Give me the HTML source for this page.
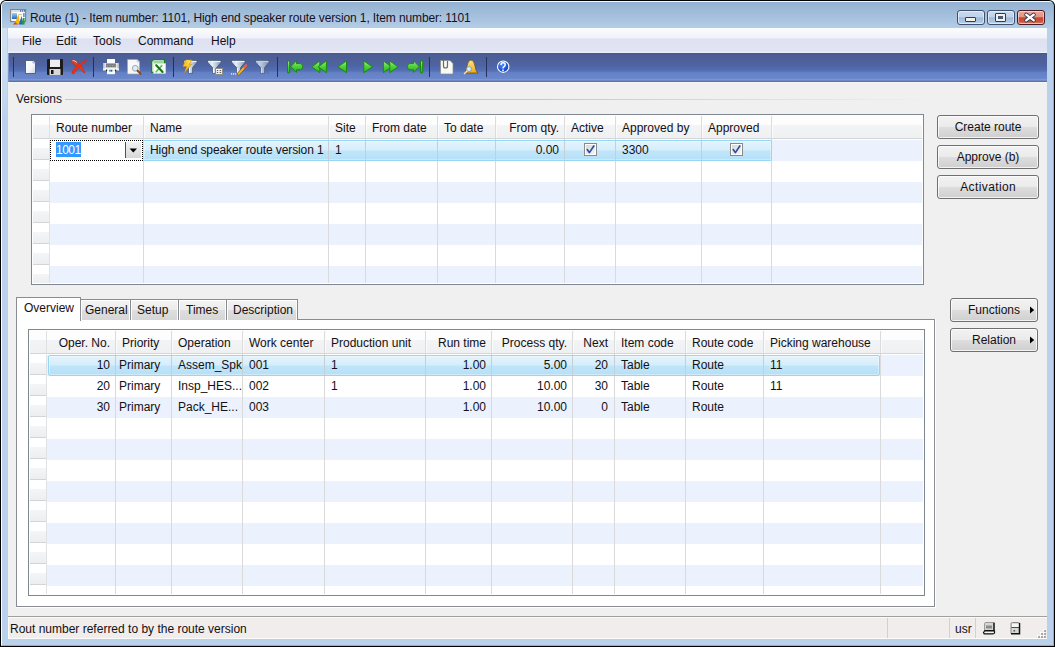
<!DOCTYPE html><html><head><meta charset="utf-8"><style>
html,body{margin:0;padding:0;}
body{width:1055px;height:647px;position:relative;overflow:hidden;background:#fff;font-family:"Liberation Sans",sans-serif;font-size:12px;color:#141014;}
.t{position:absolute;white-space:nowrap;line-height:14px;height:14px;font-size:12px;}
div{box-sizing:border-box;}
svg{position:absolute;overflow:visible;}

</style></head><body>
<div style="position:absolute;left:0px;top:0px;width:1055px;height:647px;background:#000;border-radius:6px 6px 0 0;"></div>
<div style="position:absolute;left:1px;top:1px;width:1053px;height:645px;background:linear-gradient(#93b1d1 0px,#b4cde7 26px,#b9d1ea 27px);border-top:1px solid #f4f8fc;border-left:1px solid #fafcff;border-right:1px solid #3ccff2;border-bottom:1px solid #3ccff2;border-radius:5px 5px 0 0;"></div>
<div style="position:absolute;left:2px;top:28px;width:5px;height:92px;background:linear-gradient(#d2e2f3,#c2d7ee 80%,#b9d1ea);"></div>
<svg style="left:8px;top:7px" width="20" height="20" viewBox="0 0 20 20">
<defs><linearGradient id="ib" x1="0" y1="0" x2="0" y2="1"><stop offset="0" stop-color="#9fd0f4"/><stop offset="1" stop-color="#2a64c4"/></linearGradient></defs>
<rect x="2.6" y="2.6" width="15" height="12" fill="#fbfbfb" stroke="#858585" stroke-width="1.2"/>
<rect x="3.2" y="3.2" width="13.8" height="1.6" fill="#d6d8dc"/>
<rect x="12" y="3.2" width="1.2" height="1.4" fill="#3a5a8a"/><rect x="14" y="3.2" width="1.2" height="1.4" fill="#3a5a8a"/><rect x="16" y="3.2" width="1" height="1.4" fill="#3a5a8a"/>
<rect x="4" y="6" width="5" height="6" fill="url(#ib)"/>
<rect x="15.3" y="6" width="1.2" height="4" fill="#3a6ac8"/>
<path d="M11 7.6 H14" stroke="#b0b0b0" stroke-width="0.8"/>
<path d="M6.5 17 L10.5 6.8 L12 17 Z" fill="#f6b800"/>
<path d="M10.8 17.6 L13.6 9 L15.2 17.6 Z" fill="#2a62c0"/>
<path d="M14.2 17.6 L14.8 11 L16.6 11 L16.6 17.6 Z" fill="#20a030"/>
<path d="M4.8 17.4 L7.2 15.2 L10 17.6 Z" fill="#e63818"/>
</svg>
<div class="t" style="left:30px;top:11px;color:#161020;letter-spacing:-0.12px;">Route (1) - Item number: 1101, High end speaker route version 1, Item number: 1101</div>
<div style="position:absolute;left:957px;top:10px;width:28px;height:15px;background:linear-gradient(#c7d9ee 0%,#c0d3ea 45%,#9fbad9 52%,#abc4e1 80%,#bfd4eb 100%);border:1px solid #3f4f6c;border-radius:3px;box-shadow:inset 0 0 0 1px rgba(255,255,255,0.5);"></div>
<div style="position:absolute;left:987px;top:10px;width:28px;height:15px;background:linear-gradient(#c7d9ee 0%,#c0d3ea 45%,#9fbad9 52%,#abc4e1 80%,#bfd4eb 100%);border:1px solid #3f4f6c;border-radius:3px;box-shadow:inset 0 0 0 1px rgba(255,255,255,0.5);"></div>
<div style="position:absolute;left:1017px;top:10px;width:28px;height:15px;background:linear-gradient(#e9a496 0%,#e39684 45%,#c9462c 52%,#cc5238 80%,#e08a76 100%);border:1px solid #4a1a24;border-radius:3px;box-shadow:inset 0 0 0 1px rgba(255,255,255,0.5);"></div>
<div style="position:absolute;left:965px;top:17px;width:11px;height:5px;background:#f2f0ec;border:1px solid #2f3b55;border-radius:1px;"></div>
<div style="position:absolute;left:995px;top:13px;width:11px;height:9px;background:#f2f0ec;border:1px solid #2f3b55;border-radius:1px;"></div>
<div style="position:absolute;left:998px;top:16px;width:5px;height:3px;background:#4b5a78;"></div>
<svg style="left:1024px;top:13px" width="12" height="9" viewBox="0 0 12 9">
<path d="M2.2 1.6 L9.8 7.4 M9.8 1.6 L2.2 7.4" stroke="#2d3a52" stroke-width="3.9" stroke-linecap="round"/>
<path d="M2.2 1.6 L9.8 7.4 M9.8 1.6 L2.2 7.4" stroke="#ffffff" stroke-width="2.3" stroke-linecap="round"/>
</svg>
<div style="position:absolute;left:8px;top:28px;width:1039px;height:611px;background:#f0f0f0;"></div>
<div style="position:absolute;left:8px;top:28px;width:1039px;height:25px;background:linear-gradient(#fbfcfe 0px,#f0f2f9 10px,#dde1f1 11px,#e1e4f3 23px,#eceefa 24px);"></div>
<div class="t" style="left:22px;top:34px;color:#141014;">File</div>
<div class="t" style="left:56px;top:34px;color:#141014;">Edit</div>
<div class="t" style="left:93px;top:34px;color:#141014;">Tools</div>
<div class="t" style="left:138px;top:34px;color:#141014;">Command</div>
<div class="t" style="left:211px;top:34px;color:#141014;">Help</div>
<div style="position:absolute;left:8px;top:53px;width:1039px;height:29px;background:linear-gradient(#475889 0px,#4d5e96 2px,#4f629d 11px,#4c64a8 12.5px,#5670b4 18px,#6480c4 19.5px,#6b88cc 26px,#8ca4dc 27px,#5670b0 28px);"></div>
<div style="position:absolute;left:8px;top:53px;width:1px;height:29px;background:#7d93c8;"></div>
<div style="position:absolute;left:8px;top:82px;width:1039px;height:1px;background:#f6f6f4;"></div>
<div style="position:absolute;left:13px;top:57px;width:1px;height:20px;background:#26305a;"></div>
<div style="position:absolute;left:93px;top:57px;width:1px;height:20px;background:#26305a;"></div>
<div style="position:absolute;left:173px;top:57px;width:1px;height:20px;background:#26305a;"></div>
<div style="position:absolute;left:277px;top:57px;width:1px;height:20px;background:#26305a;"></div>
<div style="position:absolute;left:429px;top:57px;width:1px;height:20px;background:#26305a;"></div>
<div style="position:absolute;left:486px;top:57px;width:1px;height:20px;background:#26305a;"></div>
<svg style="left:0;top:0" width="1055" height="90" viewBox="0 0 1055 90">
<defs>
<linearGradient id="pg" x1="0" y1="0" x2="1" y2="1"><stop offset="0" stop-color="#ffffff"/><stop offset="0.6" stop-color="#f2f4f8"/><stop offset="1" stop-color="#c9ced8"/></linearGradient>
<linearGradient id="fun" x1="0" y1="0" x2="1" y2="0"><stop offset="0" stop-color="#6f8aa8"/><stop offset="0.35" stop-color="#e9f2f8"/><stop offset="0.7" stop-color="#9fb6c8"/><stop offset="1" stop-color="#5e7690"/></linearGradient>
<linearGradient id="grn" x1="0" y1="0" x2="0" y2="1"><stop offset="0" stop-color="#9df08a"/><stop offset="0.5" stop-color="#4ed03a"/><stop offset="1" stop-color="#2fae22"/></linearGradient>
<linearGradient id="bell" x1="0" y1="0" x2="0" y2="1"><stop offset="0" stop-color="#ffe58a"/><stop offset="1" stop-color="#e9a91c"/></linearGradient>
<radialGradient id="help" cx="0.4" cy="0.35" r="0.7"><stop offset="0" stop-color="#4a8cff"/><stop offset="1" stop-color="#0836b8"/></radialGradient>
<linearGradient id="fun2" x1="0" y1="0" x2="1" y2="0"><stop offset="0" stop-color="#9fb4c8"/><stop offset="0.3" stop-color="#e8f2f8"/><stop offset="0.65" stop-color="#b8c8d6"/><stop offset="1" stop-color="#7a90a8"/></linearGradient>
</defs>
<!-- new doc -->
<path d="M25.5 60.5 H33 L35.5 63 V73.5 H25.5 Z" fill="url(#pg)" stroke="#3e4d70" stroke-width="0.8"/>
<path d="M33 60.5 V63 H35.5" fill="#dfe4ec" stroke="#7a8aa8" stroke-width="0.6"/>
<!-- save -->
<rect x="47" y="59" width="16" height="16" rx="1" fill="#1c1c1c"/>
<rect x="50" y="59.5" width="10" height="7.5" fill="#eeeeee"/>
<rect x="49.5" y="69" width="11" height="6" fill="#d8d8d8"/>
<rect x="51" y="70" width="2.5" height="4" fill="#111"/>
<!-- red X -->
<path d="M71.6 60.6 Q73 59.4 75 60.2 L80.2 64.6 L85.2 72.2 Q84.8 73.2 84 72.8 L78.4 67.8 L72.4 62.8 Z" fill="#e83a1c" stroke="#b02010" stroke-width="0.4"/>
<path d="M72.4 60.8 Q73.6 60.4 75 61 L77 62.6" stroke="#ffc8b8" stroke-width="1" fill="none"/>
<path d="M86.6 60.4 Q86.6 61.2 85.6 61.8 L79.4 66.4 L75 72.4 Q73.8 74.4 72.2 73.6 Q71.4 72.6 72.4 70.8 L77.6 64.8 L84 61 Q85.6 60 86.6 60.4 Z" fill="#e63418" stroke="#b02010" stroke-width="0.4"/>
<!-- printer -->
<rect x="107" y="59" width="8" height="4.5" fill="#ffffff"/>
<rect x="103" y="63" width="16" height="7.5" fill="#e2e4e8"/>
<rect x="103" y="63" width="1.5" height="7.5" fill="#b8bcc4"/>
<rect x="117.5" y="63" width="1.5" height="7.5" fill="#b8bcc4"/>
<rect x="106" y="63.5" width="10" height="3.8" fill="#7a7e86"/>
<path d="M107 65.8 h1 M109.5 65.8 h1 M112 65.8 h1 M114.5 65.8 h1" stroke="#c8b040" stroke-width="0.8"/>
<rect x="103" y="68.5" width="16" height="1.2" fill="#ffffff"/>
<rect x="106" y="69.6" width="1.4" height="1.6" fill="#202020"/><rect x="114.8" y="69.6" width="1.4" height="1.6" fill="#202020"/>
<rect x="107" y="70.2" width="8" height="4" fill="#fafafa"/>
<rect x="109.2" y="69.8" width="1.5" height="1.8" fill="#2a8ae8"/><rect x="110.8" y="69.8" width="1.5" height="1.8" fill="#0a6a5a"/>
<!-- preview -->
<path d="M127.5 59.5 H137 L139.5 62 V74 H127.5 Z" fill="#f8f8f8" stroke="#a0a4aa" stroke-width="0.7"/>
<path d="M137 59.5 V62 H139.5" fill="#e8e8e8" stroke="#b0b4ba" stroke-width="0.5"/>
<circle cx="135.3" cy="68.3" r="2.9" fill="#dcecfa" stroke="#9aa2aa" stroke-width="1"/>
<path d="M137.6 70.8 L140.6 73.8" stroke="#8a4a20" stroke-width="2" stroke-linecap="round"/>
<!-- excel -->
<path d="M154.5 59.6 H164.4 V72.4 H151.6 V62.5 Q151.6 59.6 154.5 59.6 Z" fill="#eaf6e8" stroke="#168a16" stroke-width="1.3"/>
<rect x="153.5" y="61" width="10" height="2.6" fill="#9ad69a"/>
<rect x="153.6" y="63.6" width="12" height="9.8" fill="#fbfdfa" stroke="#d8e0d4" stroke-width="0.5"/>
<path d="M161.8 65.6 L156.2 71.8" stroke="#5cc05c" stroke-width="1.6" stroke-linecap="round"/>
<path d="M156.2 65.2 L162.6 72" stroke="#127a12" stroke-width="2.1" stroke-linecap="round"/>
<!-- filter lightning -->
<g opacity="1.0">
<path d="M183.5 60.6 H197.2 V62.4 L192.6 67.6 V73.4 H188.7 V67.6 L183.5 62.4 Z" fill="url(#fun2)" stroke="#3c4a66" stroke-width="0.7" stroke-linejoin="round"/>
<path d="M184.2 61.5 H196.5" stroke="#eaf6fb" stroke-width="1.2"/>
<path d="M189.5 68 V73" stroke="#f4fafc" stroke-width="1"/>
</g>
<path d="M185.5 60 H192.2 L188.8 64.2 H191.6 L184.6 72.4 L186.6 66.6 H183 Z" fill="#f7c628" stroke="#d88a00" stroke-width="0.6" stroke-linejoin="round"/>
<path d="M186.2 61 H190 L187.6 64.6" stroke="#fff3a0" stroke-width="0.8" fill="none"/>
<!-- filter grid -->
<g opacity="1.0">
<path d="M207.5 60.6 H221.2 V62.4 L216.6 67.6 V73.4 H212.7 V67.6 L207.5 62.4 Z" fill="url(#fun2)" stroke="#3c4a66" stroke-width="0.7" stroke-linejoin="round"/>
<path d="M208.2 61.5 H220.5" stroke="#eaf6fb" stroke-width="1.2"/>
<path d="M213.5 68 V73" stroke="#f4fafc" stroke-width="1"/>
</g>
<rect x="215.5" y="68.5" width="7" height="6" fill="#f6f6f6" stroke="#8c8c8c" stroke-width="1"/>
<path d="M216.8 70.6 H218.2 M219.6 70.6 H221.2 M216.8 72.6 H218.2 M219.6 72.6 H221.2" stroke="#505050" stroke-width="1"/>
<!-- filter pencil -->
<g opacity="1.0">
<path d="M231.5 60.6 H245.2 V62.4 L240.6 67.6 V73.4 H236.7 V67.6 L231.5 62.4 Z" fill="url(#fun2)" stroke="#3c4a66" stroke-width="0.7" stroke-linejoin="round"/>
<path d="M232.2 61.5 H244.5" stroke="#eaf6fb" stroke-width="1.2"/>
<path d="M237.5 68 V73" stroke="#f4fafc" stroke-width="1"/>
</g>
<path d="M238.6 73.8 L245.2 66.4" stroke="#8a5a10" stroke-width="3" stroke-linecap="round"/>
<path d="M238.6 73.8 L245.2 66.4" stroke="#f0b438" stroke-width="1.8" stroke-linecap="round"/>
<path d="M244.6 67 L246 65.4" stroke="#e06050" stroke-width="2.6" stroke-linecap="round"/>
<rect x="231" y="73.3" width="1.2" height="1.2" fill="#fff"/><rect x="233" y="73.3" width="1.2" height="1.2" fill="#fff"/><rect x="235" y="73.3" width="1.2" height="1.2" fill="#fff"/>
<!-- filter clear -->
<g opacity="0.75">
<path d="M255.5 60.6 H269.2 V62.4 L264.6 67.6 V73.4 H260.7 V67.6 L255.5 62.4 Z" fill="url(#fun2)" stroke="#3c4a66" stroke-width="0.7" stroke-linejoin="round"/>
<path d="M256.2 61.5 H268.5" stroke="#eaf6fb" stroke-width="1.2"/>
<path d="M261.5 68 V73" stroke="#f4fafc" stroke-width="1"/>
</g>
<path d="M264.5 69.5 L269 74 M269 69.5 L264.5 74" stroke="#5a6a88" stroke-width="0.8" opacity="0.8"/>
<!-- first -->
<g fill="url(#grn)" stroke="#198a10" stroke-width="1" stroke-linejoin="round">
<rect x="287.5" y="61" width="2.2" height="11.8"/>
<path d="M290.8 66.6 L296.5 60.8 V63.6 H300.2 Q302.6 63.6 302.6 66.6 Q302.6 69.8 300.2 69.8 H296.5 V72.4 Z"/>
<path d="M311.8 66.8 L319.8 60.9 V72.7 Z"/>
<path d="M318.2 66.8 L326.4 60.9 V72.7 Z"/>
<path d="M337.8 66.8 L346.5 60.9 V72.7 Z"/>
<path d="M372.5 66.8 L363.8 60.9 V72.7 Z"/>
<path d="M391.5 66.8 L383.3 60.9 V72.7 Z"/>
<path d="M398 66.8 L389.8 60.9 V72.7 Z"/>
<rect x="420.5" y="61" width="2.2" height="11.8"/>
<path d="M419.2 66.6 L413.5 60.8 V63.6 H409.8 Q407.4 63.6 407.4 66.6 Q407.4 69.8 409.8 69.8 H413.5 V72.4 Z"/>
</g>
<!-- doc with clip -->
<path d="M440.5 60.5 H450 L453 63.5 V74 H440.5 Z" fill="#f8f8f4" stroke="#8a8a8a" stroke-width="0.7"/>
<path d="M443.5 59 V66 Q443.5 68 445.5 68 Q447.5 68 447.5 66 V61" fill="none" stroke="#6a6a6a" stroke-width="1.2"/>
<!-- bell -->
<path d="M464.5 73 Q466 72 467 66 Q468 60 471 60 Q474 60 475 66 Q476 72 478 73 Z" fill="url(#bell)" stroke="#6a4a10" stroke-width="0.7"/>
<circle cx="469" cy="69" r="2.4" fill="#dfefff" stroke="#8a9aa8" stroke-width="0.9"/>
<path d="M467.2 70.8 L464 74" stroke="#e8e8e8" stroke-width="1.3"/>
<!-- help -->
<circle cx="503.2" cy="66.7" r="5.7" fill="url(#help)" stroke="#ffffff" stroke-width="1.1"/>
<path d="M501 65 Q501 62.8 503.2 62.8 Q505.2 62.8 505.2 64.8 Q505.2 66 503.8 66.8 Q503 67.3 503 68.6" fill="none" stroke="#ffffff" stroke-width="1.5"/>
<rect x="502.2" y="69.6" width="1.6" height="1.6" fill="#ffffff"/>
</svg>

<div class="t" style="left:16px;top:92px;color:#141014;">Versions</div>
<div style="position:absolute;left:65px;top:99px;width:872px;height:1px;background:linear-gradient(90deg,#b0c9e7 0%,#b6cce8 55%,rgba(240,240,240,0) 100%);"></div>
<div style="position:absolute;left:31px;top:114px;width:893px;height:171px;border:1px solid #7f8790;background:#fff;"></div>
<div style="position:absolute;left:33px;top:115px;width:889px;height:10px;background:#fdfdfd;"></div>
<div style="position:absolute;left:33px;top:125px;width:889px;height:13px;background:linear-gradient(#f3f4f6,#eff0f2);"></div>
<div style="position:absolute;left:33px;top:138px;width:889px;height:1px;background:#d5d5d5;"></div>
<div style="position:absolute;left:50px;top:140px;width:872px;height:21px;background:#ebf2fd;"></div>
<div style="position:absolute;left:33px;top:148px;width:16px;height:11px;background:linear-gradient(#f4f5f7,#edeef0);"></div>
<div style="position:absolute;left:33px;top:159px;width:17px;height:1px;background:#d4d4d4;"></div>
<div style="position:absolute;left:33px;top:169px;width:16px;height:11px;background:linear-gradient(#f4f5f7,#edeef0);"></div>
<div style="position:absolute;left:33px;top:180px;width:17px;height:1px;background:#d4d4d4;"></div>
<div style="position:absolute;left:50px;top:182px;width:872px;height:21px;background:#ebf2fd;"></div>
<div style="position:absolute;left:33px;top:190px;width:16px;height:11px;background:linear-gradient(#f4f5f7,#edeef0);"></div>
<div style="position:absolute;left:33px;top:201px;width:17px;height:1px;background:#d4d4d4;"></div>
<div style="position:absolute;left:33px;top:211px;width:16px;height:11px;background:linear-gradient(#f4f5f7,#edeef0);"></div>
<div style="position:absolute;left:33px;top:222px;width:17px;height:1px;background:#d4d4d4;"></div>
<div style="position:absolute;left:50px;top:224px;width:872px;height:21px;background:#ebf2fd;"></div>
<div style="position:absolute;left:33px;top:232px;width:16px;height:11px;background:linear-gradient(#f4f5f7,#edeef0);"></div>
<div style="position:absolute;left:33px;top:243px;width:17px;height:1px;background:#d4d4d4;"></div>
<div style="position:absolute;left:33px;top:253px;width:16px;height:11px;background:linear-gradient(#f4f5f7,#edeef0);"></div>
<div style="position:absolute;left:33px;top:264px;width:17px;height:1px;background:#d4d4d4;"></div>
<div style="position:absolute;left:50px;top:266px;width:872px;height:17px;background:#ebf2fd;"></div>
<div style="position:absolute;left:33px;top:274px;width:16px;height:9px;background:linear-gradient(#f4f5f7,#edeef0);"></div>
<div style="position:absolute;left:49px;top:116px;width:1px;height:22px;background:#e0e0e0;"></div>
<div style="position:absolute;left:49px;top:140px;width:1px;height:143px;background:#e2e2e2;"></div>
<div style="position:absolute;left:143px;top:116px;width:1px;height:22px;background:#dcdcdc;"></div>
<div style="position:absolute;left:144px;top:116px;width:1px;height:22px;background:#fbfbfb;"></div>
<div style="position:absolute;left:143px;top:139px;width:1px;height:144px;background:#dadada;"></div>
<div style="position:absolute;left:328px;top:116px;width:1px;height:22px;background:#dcdcdc;"></div>
<div style="position:absolute;left:329px;top:116px;width:1px;height:22px;background:#fbfbfb;"></div>
<div style="position:absolute;left:328px;top:139px;width:1px;height:144px;background:#dadada;"></div>
<div style="position:absolute;left:365px;top:116px;width:1px;height:22px;background:#dcdcdc;"></div>
<div style="position:absolute;left:366px;top:116px;width:1px;height:22px;background:#fbfbfb;"></div>
<div style="position:absolute;left:365px;top:139px;width:1px;height:144px;background:#dadada;"></div>
<div style="position:absolute;left:437px;top:116px;width:1px;height:22px;background:#dcdcdc;"></div>
<div style="position:absolute;left:438px;top:116px;width:1px;height:22px;background:#fbfbfb;"></div>
<div style="position:absolute;left:437px;top:139px;width:1px;height:144px;background:#dadada;"></div>
<div style="position:absolute;left:495px;top:116px;width:1px;height:22px;background:#dcdcdc;"></div>
<div style="position:absolute;left:496px;top:116px;width:1px;height:22px;background:#fbfbfb;"></div>
<div style="position:absolute;left:495px;top:139px;width:1px;height:144px;background:#dadada;"></div>
<div style="position:absolute;left:564px;top:116px;width:1px;height:22px;background:#dcdcdc;"></div>
<div style="position:absolute;left:565px;top:116px;width:1px;height:22px;background:#fbfbfb;"></div>
<div style="position:absolute;left:564px;top:139px;width:1px;height:144px;background:#dadada;"></div>
<div style="position:absolute;left:615px;top:116px;width:1px;height:22px;background:#dcdcdc;"></div>
<div style="position:absolute;left:616px;top:116px;width:1px;height:22px;background:#fbfbfb;"></div>
<div style="position:absolute;left:615px;top:139px;width:1px;height:144px;background:#dadada;"></div>
<div style="position:absolute;left:701px;top:116px;width:1px;height:22px;background:#dcdcdc;"></div>
<div style="position:absolute;left:702px;top:116px;width:1px;height:22px;background:#fbfbfb;"></div>
<div style="position:absolute;left:701px;top:139px;width:1px;height:144px;background:#dadada;"></div>
<div style="position:absolute;left:771px;top:116px;width:1px;height:22px;background:#dcdcdc;"></div>
<div style="position:absolute;left:772px;top:116px;width:1px;height:22px;background:#fbfbfb;"></div>
<div style="position:absolute;left:771px;top:139px;width:1px;height:144px;background:#dadada;"></div>
<div style="position:absolute;left:144px;top:140px;width:628px;height:21px;background:linear-gradient(#e3f4fd 0%,#d6eefb 45%,#c0e5f9 55%,#b5e0f8 100%);border:1px solid #96d7f7;border-radius:2px;border-left:none;border-top-left-radius:0;border-bottom-left-radius:0;box-shadow:inset 0 0 0 1px rgba(255,255,255,0.35);"></div>
<div style="position:absolute;left:328px;top:141px;width:1px;height:19px;background:#c4cfd6;"></div>
<div style="position:absolute;left:365px;top:141px;width:1px;height:19px;background:#c4cfd6;"></div>
<div style="position:absolute;left:437px;top:141px;width:1px;height:19px;background:#c4cfd6;"></div>
<div style="position:absolute;left:495px;top:141px;width:1px;height:19px;background:#c4cfd6;"></div>
<div style="position:absolute;left:564px;top:141px;width:1px;height:19px;background:#c4cfd6;"></div>
<div style="position:absolute;left:615px;top:141px;width:1px;height:19px;background:#c4cfd6;"></div>
<div style="position:absolute;left:701px;top:141px;width:1px;height:19px;background:#c4cfd6;"></div>
<div class="t" style="left:56px;top:121px;color:#141014;">Route number</div>
<div class="t" style="left:150px;top:121px;color:#141014;">Name</div>
<div class="t" style="left:335px;top:121px;color:#141014;">Site</div>
<div class="t" style="left:372px;top:121px;color:#141014;">From date</div>
<div class="t" style="left:444px;top:121px;color:#141014;">To date</div>
<div class="t" style="left:159px;width:400px;text-align:right;top:121px;color:#141014;">From qty.</div>
<div class="t" style="left:571px;top:121px;color:#141014;">Active</div>
<div class="t" style="left:622px;top:121px;color:#141014;">Approved by</div>
<div class="t" style="left:708px;top:121px;color:#141014;">Approved</div>
<div style="position:absolute;left:50px;top:140px;width:93px;height:21px;background:#fff;"></div>
<div style="position:absolute;left:50px;top:140px;width:93px;height:21px;border:1px dotted #000;"></div>
<div style="position:absolute;left:56px;top:142px;width:25px;height:15px;background:#3399ff;"></div>
<div class="t" style="left:56px;top:143px;color:#fff;letter-spacing:-0.5px;">1001</div>
<div style="position:absolute;left:125px;top:142px;width:1px;height:16px;background:#505050;"></div>
<div style="position:absolute;left:126px;top:142px;width:15px;height:16px;background:linear-gradient(#f2f2f2,#d8d8d8);"></div>
<svg style="left:129px;top:148px" width="9" height="5" viewBox="0 0 9 5"><path d="M0.5 0.5 H8 L4.25 4.5 Z" fill="#000"/></svg>
<div class="t" style="left:150px;top:143px;color:#141014;letter-spacing:-0.1px;">High end speaker route version 1</div>
<div class="t" style="left:335px;top:143px;color:#141014;">1</div>
<div class="t" style="left:159px;width:400px;text-align:right;top:143px;color:#141014;">0.00</div>
<div class="t" style="left:622px;top:143px;color:#141014;">3300</div>
<div style="position:absolute;left:584px;top:143px;width:13px;height:13px;border:1px solid #8a8a8a;background:#fff;"></div>
<div style="position:absolute;left:586px;top:145px;width:9px;height:9px;background:linear-gradient(135deg,#d8d8d8,#f6f6f6);"></div>
<svg style="left:584px;top:143px" width="13" height="13" viewBox="0 0 13 13"><path d="M3.2 6.6 L5.4 9.6 L9.8 3" fill="none" stroke="#2f4f9e" stroke-width="1.7" stroke-linecap="round" stroke-linejoin="round"/></svg>
<div style="position:absolute;left:730px;top:143px;width:13px;height:13px;border:1px solid #8a8a8a;background:#fff;"></div>
<div style="position:absolute;left:732px;top:145px;width:9px;height:9px;background:linear-gradient(135deg,#d8d8d8,#f6f6f6);"></div>
<svg style="left:730px;top:143px" width="13" height="13" viewBox="0 0 13 13"><path d="M3.2 6.6 L5.4 9.6 L9.8 3" fill="none" stroke="#2f4f9e" stroke-width="1.7" stroke-linecap="round" stroke-linejoin="round"/></svg>
<div style="position:absolute;left:937px;top:115px;width:102px;height:24px;border:1px solid #707070;border-radius:3px;background:linear-gradient(#f2f2f2 0%,#ebebeb 48%,#dddddd 52%,#cfcfcf 100%);box-shadow:inset 0 0 0 1px rgba(255,255,255,0.75);"></div>
<div class="t" style="left:788.0px;width:400px;text-align:center;top:120px;color:#141014;letter-spacing:0px;">Create route</div>
<div style="position:absolute;left:937px;top:145px;width:102px;height:24px;border:1px solid #707070;border-radius:3px;background:linear-gradient(#f2f2f2 0%,#ebebeb 48%,#dddddd 52%,#cfcfcf 100%);box-shadow:inset 0 0 0 1px rgba(255,255,255,0.75);"></div>
<div class="t" style="left:788.0px;width:400px;text-align:center;top:150px;color:#141014;letter-spacing:0px;">Approve (b)</div>
<div style="position:absolute;left:937px;top:175px;width:102px;height:24px;border:1px solid #707070;border-radius:3px;background:linear-gradient(#f2f2f2 0%,#ebebeb 48%,#dddddd 52%,#cfcfcf 100%);box-shadow:inset 0 0 0 1px rgba(255,255,255,0.75);"></div>
<div class="t" style="left:788.2px;width:400px;text-align:center;top:180px;color:#141014;letter-spacing:0.4px;">Activation</div>
<div style="position:absolute;left:950px;top:298px;width:88px;height:24px;border:1px solid #707070;border-radius:3px;background:linear-gradient(#f2f2f2 0%,#ebebeb 48%,#dddddd 52%,#cfcfcf 100%);box-shadow:inset 0 0 0 1px rgba(255,255,255,0.75);"></div>
<div class="t" style="left:968px;top:303px;color:#141014;">Functions</div>
<svg style="left:1030px;top:306px" width="5" height="8" viewBox="0 0 5 8"><path d="M0 0.5 L4.2 4 L0 7.5 Z" fill="#000"/></svg>
<div style="position:absolute;left:950px;top:328px;width:88px;height:24px;border:1px solid #707070;border-radius:3px;background:linear-gradient(#f2f2f2 0%,#ebebeb 48%,#dddddd 52%,#cfcfcf 100%);box-shadow:inset 0 0 0 1px rgba(255,255,255,0.75);"></div>
<div class="t" style="left:972px;top:333px;color:#141014;">Relation</div>
<svg style="left:1030px;top:336px" width="5" height="8" viewBox="0 0 5 8"><path d="M0 0.5 L4.2 4 L0 7.5 Z" fill="#000"/></svg>
<div style="position:absolute;left:16px;top:319px;width:920px;height:289px;background:#fff;"></div>
<div style="position:absolute;left:16px;top:319px;width:919px;height:288px;border:1px solid #898c95;background:#fff;"></div>
<div style="position:absolute;left:80px;top:299px;width:51px;height:21px;border:1px solid #898c95;border-bottom:none;background:linear-gradient(#f3f3f3 0%,#ebebeb 48%,#dedede 52%,#d6d6d6 100%);box-shadow:inset 1px 1px 0 #fff,inset -1px 0 0 #fbfbfb;"></div>
<div style="position:absolute;left:130px;top:299px;width:49px;height:21px;border:1px solid #898c95;border-bottom:none;background:linear-gradient(#f3f3f3 0%,#ebebeb 48%,#dedede 52%,#d6d6d6 100%);box-shadow:inset 1px 1px 0 #fff,inset -1px 0 0 #fbfbfb;"></div>
<div style="position:absolute;left:178px;top:299px;width:49px;height:21px;border:1px solid #898c95;border-bottom:none;background:linear-gradient(#f3f3f3 0%,#ebebeb 48%,#dedede 52%,#d6d6d6 100%);box-shadow:inset 1px 1px 0 #fff,inset -1px 0 0 #fbfbfb;"></div>
<div style="position:absolute;left:226px;top:299px;width:72px;height:21px;border:1px solid #898c95;border-bottom:none;background:linear-gradient(#f3f3f3 0%,#ebebeb 48%,#dedede 52%,#d6d6d6 100%);box-shadow:inset 1px 1px 0 #fff,inset -1px 0 0 #fbfbfb;"></div>
<div class="t" style="left:85px;top:303px;color:#141014;">General</div>
<div class="t" style="left:137px;top:303px;color:#141014;">Setup</div>
<div class="t" style="left:186px;top:303px;color:#141014;">Times</div>
<div class="t" style="left:233px;top:303px;color:#141014;">Description</div>
<div style="position:absolute;left:16px;top:297px;width:65px;height:24px;border:1px solid #898c95;border-bottom:none;background:#fff;"></div>
<div class="t" style="left:24px;top:301px;color:#141014;">Overview</div>
<div style="position:absolute;left:28px;top:329px;width:897px;height:267px;border:1px solid #7f8790;background:#fff;"></div>
<div style="position:absolute;left:30px;top:330px;width:893px;height:10px;background:#fdfdfd;"></div>
<div style="position:absolute;left:30px;top:340px;width:893px;height:13px;background:linear-gradient(#f3f4f6,#eff0f2);"></div>
<div style="position:absolute;left:30px;top:353px;width:893px;height:1px;background:#d5d5d5;"></div>
<div style="position:absolute;left:47px;top:355px;width:876px;height:21px;background:#ebf2fd;"></div>
<div style="position:absolute;left:30px;top:363px;width:16px;height:11px;background:linear-gradient(#f4f5f7,#edeef0);"></div>
<div style="position:absolute;left:30px;top:374px;width:17px;height:1px;background:#d4d4d4;"></div>
<div style="position:absolute;left:30px;top:384px;width:16px;height:11px;background:linear-gradient(#f4f5f7,#edeef0);"></div>
<div style="position:absolute;left:30px;top:395px;width:17px;height:1px;background:#d4d4d4;"></div>
<div style="position:absolute;left:47px;top:397px;width:876px;height:21px;background:#ebf2fd;"></div>
<div style="position:absolute;left:30px;top:405px;width:16px;height:11px;background:linear-gradient(#f4f5f7,#edeef0);"></div>
<div style="position:absolute;left:30px;top:416px;width:17px;height:1px;background:#d4d4d4;"></div>
<div style="position:absolute;left:30px;top:426px;width:16px;height:11px;background:linear-gradient(#f4f5f7,#edeef0);"></div>
<div style="position:absolute;left:30px;top:437px;width:17px;height:1px;background:#d4d4d4;"></div>
<div style="position:absolute;left:47px;top:439px;width:876px;height:21px;background:#ebf2fd;"></div>
<div style="position:absolute;left:30px;top:447px;width:16px;height:11px;background:linear-gradient(#f4f5f7,#edeef0);"></div>
<div style="position:absolute;left:30px;top:458px;width:17px;height:1px;background:#d4d4d4;"></div>
<div style="position:absolute;left:30px;top:468px;width:16px;height:11px;background:linear-gradient(#f4f5f7,#edeef0);"></div>
<div style="position:absolute;left:30px;top:479px;width:17px;height:1px;background:#d4d4d4;"></div>
<div style="position:absolute;left:47px;top:481px;width:876px;height:21px;background:#ebf2fd;"></div>
<div style="position:absolute;left:30px;top:489px;width:16px;height:11px;background:linear-gradient(#f4f5f7,#edeef0);"></div>
<div style="position:absolute;left:30px;top:500px;width:17px;height:1px;background:#d4d4d4;"></div>
<div style="position:absolute;left:30px;top:510px;width:16px;height:11px;background:linear-gradient(#f4f5f7,#edeef0);"></div>
<div style="position:absolute;left:30px;top:521px;width:17px;height:1px;background:#d4d4d4;"></div>
<div style="position:absolute;left:47px;top:523px;width:876px;height:21px;background:#ebf2fd;"></div>
<div style="position:absolute;left:30px;top:531px;width:16px;height:11px;background:linear-gradient(#f4f5f7,#edeef0);"></div>
<div style="position:absolute;left:30px;top:542px;width:17px;height:1px;background:#d4d4d4;"></div>
<div style="position:absolute;left:30px;top:552px;width:16px;height:11px;background:linear-gradient(#f4f5f7,#edeef0);"></div>
<div style="position:absolute;left:30px;top:563px;width:17px;height:1px;background:#d4d4d4;"></div>
<div style="position:absolute;left:47px;top:565px;width:876px;height:21px;background:#ebf2fd;"></div>
<div style="position:absolute;left:30px;top:573px;width:16px;height:11px;background:linear-gradient(#f4f5f7,#edeef0);"></div>
<div style="position:absolute;left:30px;top:584px;width:17px;height:1px;background:#d4d4d4;"></div>
<div style="position:absolute;left:46px;top:331px;width:1px;height:22px;background:#e0e0e0;"></div>
<div style="position:absolute;left:46px;top:355px;width:1px;height:239px;background:#e2e2e2;"></div>
<div style="position:absolute;left:115px;top:331px;width:1px;height:22px;background:#dcdcdc;"></div>
<div style="position:absolute;left:116px;top:331px;width:1px;height:22px;background:#fbfbfb;"></div>
<div style="position:absolute;left:115px;top:354px;width:1px;height:240px;background:#dadada;"></div>
<div style="position:absolute;left:171px;top:331px;width:1px;height:22px;background:#dcdcdc;"></div>
<div style="position:absolute;left:172px;top:331px;width:1px;height:22px;background:#fbfbfb;"></div>
<div style="position:absolute;left:171px;top:354px;width:1px;height:240px;background:#dadada;"></div>
<div style="position:absolute;left:242px;top:331px;width:1px;height:22px;background:#dcdcdc;"></div>
<div style="position:absolute;left:243px;top:331px;width:1px;height:22px;background:#fbfbfb;"></div>
<div style="position:absolute;left:242px;top:354px;width:1px;height:240px;background:#dadada;"></div>
<div style="position:absolute;left:324px;top:331px;width:1px;height:22px;background:#dcdcdc;"></div>
<div style="position:absolute;left:325px;top:331px;width:1px;height:22px;background:#fbfbfb;"></div>
<div style="position:absolute;left:324px;top:354px;width:1px;height:240px;background:#dadada;"></div>
<div style="position:absolute;left:425px;top:331px;width:1px;height:22px;background:#dcdcdc;"></div>
<div style="position:absolute;left:426px;top:331px;width:1px;height:22px;background:#fbfbfb;"></div>
<div style="position:absolute;left:425px;top:354px;width:1px;height:240px;background:#dadada;"></div>
<div style="position:absolute;left:491px;top:331px;width:1px;height:22px;background:#dcdcdc;"></div>
<div style="position:absolute;left:492px;top:331px;width:1px;height:22px;background:#fbfbfb;"></div>
<div style="position:absolute;left:491px;top:354px;width:1px;height:240px;background:#dadada;"></div>
<div style="position:absolute;left:572px;top:331px;width:1px;height:22px;background:#dcdcdc;"></div>
<div style="position:absolute;left:573px;top:331px;width:1px;height:22px;background:#fbfbfb;"></div>
<div style="position:absolute;left:572px;top:354px;width:1px;height:240px;background:#dadada;"></div>
<div style="position:absolute;left:614px;top:331px;width:1px;height:22px;background:#dcdcdc;"></div>
<div style="position:absolute;left:615px;top:331px;width:1px;height:22px;background:#fbfbfb;"></div>
<div style="position:absolute;left:614px;top:354px;width:1px;height:240px;background:#dadada;"></div>
<div style="position:absolute;left:685px;top:331px;width:1px;height:22px;background:#dcdcdc;"></div>
<div style="position:absolute;left:686px;top:331px;width:1px;height:22px;background:#fbfbfb;"></div>
<div style="position:absolute;left:685px;top:354px;width:1px;height:240px;background:#dadada;"></div>
<div style="position:absolute;left:763px;top:331px;width:1px;height:22px;background:#dcdcdc;"></div>
<div style="position:absolute;left:764px;top:331px;width:1px;height:22px;background:#fbfbfb;"></div>
<div style="position:absolute;left:763px;top:354px;width:1px;height:240px;background:#dadada;"></div>
<div style="position:absolute;left:880px;top:331px;width:1px;height:22px;background:#dcdcdc;"></div>
<div style="position:absolute;left:881px;top:331px;width:1px;height:22px;background:#fbfbfb;"></div>
<div style="position:absolute;left:880px;top:354px;width:1px;height:240px;background:#dadada;"></div>
<div style="position:absolute;left:48px;top:355px;width:832px;height:21px;background:linear-gradient(#e3f4fd 0%,#d6eefb 45%,#c0e5f9 55%,#b5e0f8 100%);border:1px solid #96d7f7;border-radius:2px;box-shadow:inset 0 0 0 1px rgba(255,255,255,0.35);"></div>
<div style="position:absolute;left:115px;top:356px;width:1px;height:19px;background:#c4cfd6;"></div>
<div style="position:absolute;left:171px;top:356px;width:1px;height:19px;background:#c4cfd6;"></div>
<div style="position:absolute;left:242px;top:356px;width:1px;height:19px;background:#c4cfd6;"></div>
<div style="position:absolute;left:324px;top:356px;width:1px;height:19px;background:#c4cfd6;"></div>
<div style="position:absolute;left:425px;top:356px;width:1px;height:19px;background:#c4cfd6;"></div>
<div style="position:absolute;left:491px;top:356px;width:1px;height:19px;background:#c4cfd6;"></div>
<div style="position:absolute;left:572px;top:356px;width:1px;height:19px;background:#c4cfd6;"></div>
<div style="position:absolute;left:614px;top:356px;width:1px;height:19px;background:#c4cfd6;"></div>
<div style="position:absolute;left:685px;top:356px;width:1px;height:19px;background:#c4cfd6;"></div>
<div style="position:absolute;left:763px;top:356px;width:1px;height:19px;background:#c4cfd6;"></div>
<div class="t" style="left:-290px;width:400px;text-align:right;top:336px;color:#141014;">Oper. No.</div>
<div class="t" style="left:122px;top:336px;color:#141014;">Priority</div>
<div class="t" style="left:178px;top:336px;color:#141014;">Operation</div>
<div class="t" style="left:249px;top:336px;color:#141014;">Work center</div>
<div class="t" style="left:331px;top:336px;color:#141014;">Production unit</div>
<div class="t" style="left:86px;width:400px;text-align:right;top:336px;color:#141014;">Run time</div>
<div class="t" style="left:167px;width:400px;text-align:right;top:336px;color:#141014;">Process qty.</div>
<div class="t" style="left:208px;width:400px;text-align:right;top:336px;color:#141014;">Next</div>
<div class="t" style="left:621px;top:336px;color:#141014;">Item code</div>
<div class="t" style="left:692px;top:336px;color:#141014;">Route code</div>
<div class="t" style="left:770px;top:336px;color:#141014;">Picking warehouse</div>
<div class="t" style="left:-290px;width:400px;text-align:right;top:358px;color:#141014;">10</div>
<div class="t" style="left:119px;top:358px;color:#141014;">Primary</div>
<div class="t" style="left:178px;top:358px;color:#141014;">Assem_Spk</div>
<div class="t" style="left:249px;top:358px;color:#141014;">001</div>
<div class="t" style="left:331px;top:358px;color:#141014;">1</div>
<div class="t" style="left:86px;width:400px;text-align:right;top:358px;color:#141014;">1.00</div>
<div class="t" style="left:167px;width:400px;text-align:right;top:358px;color:#141014;">5.00</div>
<div class="t" style="left:208px;width:400px;text-align:right;top:358px;color:#141014;">20</div>
<div class="t" style="left:621px;top:358px;color:#141014;">Table</div>
<div class="t" style="left:692px;top:358px;color:#141014;">Route</div>
<div class="t" style="left:770px;top:358px;color:#141014;">11</div>
<div class="t" style="left:-290px;width:400px;text-align:right;top:379px;color:#141014;">20</div>
<div class="t" style="left:119px;top:379px;color:#141014;">Primary</div>
<div class="t" style="left:178px;top:379px;color:#141014;">Insp_HES...</div>
<div class="t" style="left:249px;top:379px;color:#141014;">002</div>
<div class="t" style="left:331px;top:379px;color:#141014;">1</div>
<div class="t" style="left:86px;width:400px;text-align:right;top:379px;color:#141014;">1.00</div>
<div class="t" style="left:167px;width:400px;text-align:right;top:379px;color:#141014;">10.00</div>
<div class="t" style="left:208px;width:400px;text-align:right;top:379px;color:#141014;">30</div>
<div class="t" style="left:621px;top:379px;color:#141014;">Table</div>
<div class="t" style="left:692px;top:379px;color:#141014;">Route</div>
<div class="t" style="left:770px;top:379px;color:#141014;">11</div>
<div class="t" style="left:-290px;width:400px;text-align:right;top:400px;color:#141014;">30</div>
<div class="t" style="left:119px;top:400px;color:#141014;">Primary</div>
<div class="t" style="left:178px;top:400px;color:#141014;">Pack_HE...</div>
<div class="t" style="left:249px;top:400px;color:#141014;">003</div>
<div class="t" style="left:86px;width:400px;text-align:right;top:400px;color:#141014;">1.00</div>
<div class="t" style="left:167px;width:400px;text-align:right;top:400px;color:#141014;">10.00</div>
<div class="t" style="left:208px;width:400px;text-align:right;top:400px;color:#141014;">0</div>
<div class="t" style="left:621px;top:400px;color:#141014;">Table</div>
<div class="t" style="left:692px;top:400px;color:#141014;">Route</div>
<div style="position:absolute;left:8px;top:616px;width:1039px;height:1px;background:#a0a0a0;"></div>
<div style="position:absolute;left:8px;top:617px;width:1039px;height:22px;background:#f0edec;border-top:1px solid #fbfafa;border-bottom:1px solid #fbfbfb;border-left:1px solid #fbfbfb;"></div>
<div class="t" style="left:10px;top:622px;color:#141014;">Rout number referred to by the route version</div>
<div style="position:absolute;left:887px;top:618px;width:1px;height:20px;background:#d4d0ce;"></div>
<div style="position:absolute;left:949px;top:618px;width:1px;height:20px;background:#d4d0ce;"></div>
<div style="position:absolute;left:975px;top:618px;width:1px;height:20px;background:#d4d0ce;"></div>
<div class="t" style="left:955px;top:622px;color:#141014;">usr</div>
<svg style="left:980px;top:618px" width="45" height="20" viewBox="0 0 45 20">
<path d="M4.5 5.5 Q4.5 4.5 6 4.5 H14 V12.5 H4.5 Z" fill="#d4d4d4" stroke="#9a9a9a" stroke-width="1"/>
<path d="M14 4.8 V12.8 H4.5" fill="none" stroke="#101010" stroke-width="1.4"/>
<rect x="6" y="7.5" width="6" height="3" fill="#8c8c8c"/>
<path d="M3.5 14.5 L4.5 13 H14.5 L14.5 15 Q14 15.8 13 15.8 H4.2 Z" fill="#f4f4f4" stroke="#101010" stroke-width="1.2"/>
<path d="M31 5.5 Q31 4.5 32.5 4.5 H38.5 Q39.5 4.5 39.5 5.5 V15.5 H31 Z" fill="#d8d8d8" stroke="#8a8a8a" stroke-width="1"/>
<path d="M39.5 5 V15.8 H31" fill="none" stroke="#101010" stroke-width="1.5"/>
<rect x="32" y="6" width="6.5" height="3" fill="#f6f6f6"/>
<path d="M31.5 9.5 H39" stroke="#3a3a3a" stroke-width="0.9"/>
<rect x="33.5" y="12" width="1.6" height="1.6" fill="#5a5a5a"/>
</svg>
<div style="position:absolute;left:1043px;top:629px;width:2px;height:2px;background:#ffffff;"></div>
<div style="position:absolute;left:1044px;top:630px;width:2px;height:2px;background:#a8a8a8;"></div>
<div style="position:absolute;left:1040px;top:632px;width:2px;height:2px;background:#ffffff;"></div>
<div style="position:absolute;left:1041px;top:633px;width:2px;height:2px;background:#a8a8a8;"></div>
<div style="position:absolute;left:1043px;top:632px;width:2px;height:2px;background:#ffffff;"></div>
<div style="position:absolute;left:1044px;top:633px;width:2px;height:2px;background:#a8a8a8;"></div>
<div style="position:absolute;left:1037px;top:635px;width:2px;height:2px;background:#ffffff;"></div>
<div style="position:absolute;left:1038px;top:636px;width:2px;height:2px;background:#a8a8a8;"></div>
<div style="position:absolute;left:1040px;top:635px;width:2px;height:2px;background:#ffffff;"></div>
<div style="position:absolute;left:1041px;top:636px;width:2px;height:2px;background:#a8a8a8;"></div>
<div style="position:absolute;left:1043px;top:635px;width:2px;height:2px;background:#ffffff;"></div>
<div style="position:absolute;left:1044px;top:636px;width:2px;height:2px;background:#a8a8a8;"></div>
</body></html>
